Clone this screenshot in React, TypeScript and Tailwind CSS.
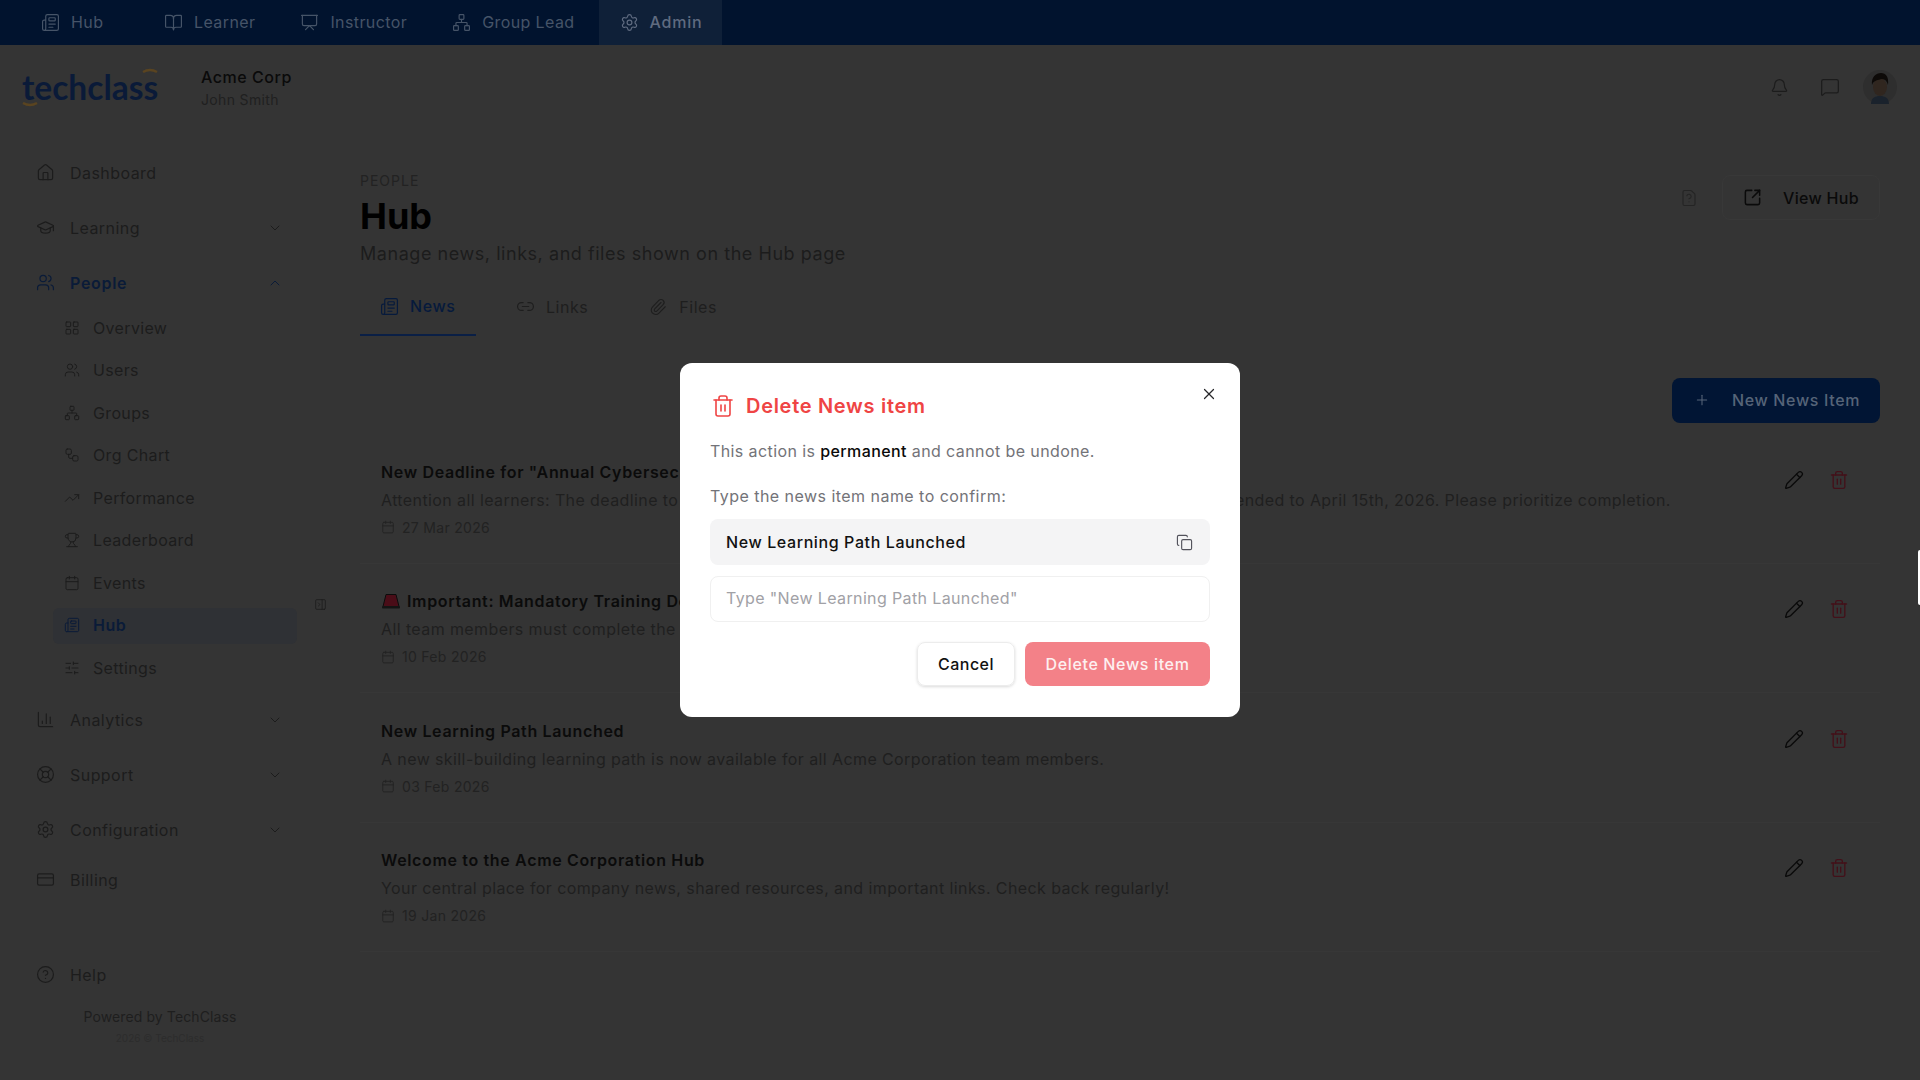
import React from "react";
import {
  Newspaper, BookOpen, Presentation, Network, Settings, Home, GraduationCap, Users, LayoutGrid, Workflow,
  TrendingUp, Trophy, Calendar, SlidersHorizontal, ChartColumn, LifeBuoy, CreditCard, CircleHelp, Bell,
  MessageSquare, FileQuestion, SquareArrowOutUpRight, Plus, Link2, Paperclip, Trash2, X, Copy, Pencil,
  ChevronDown, ChevronUp, PanelLeftClose,
} from "lucide-react";

const font = { fontFamily: "Inter, 'Liberation Sans', sans-serif" };

function TopTab({ icon: Icon, label, active, extra }: { icon: any; label: string; active?: boolean; extra?: string }) {
  return (
    <div className={`flex h-[45px] items-center gap-[11px] pl-[21px] text-[16px] ${active ? "bg-[#0f2038] pr-[19px] text-[#5f6b80] font-medium tracking-[0.8px]" : "pr-[21px] tracking-[0.4px] text-[#465468]"} ${extra ?? ""}`}>
      <Icon size={19} strokeWidth={1.5} />
      <span>{label}</span>
    </div>
  );
}

function NavItem({ icon: Icon, label, chevron, active, h = "h-[55px]" }: { icon: any; label: string; chevron?: "up" | "down"; active?: boolean; h?: string }) {
  return (
    <div className={`flex ${h} items-center pl-[36px] pr-[37px] text-[16px] ${active ? "text-[#0a1b38] font-semibold tracking-[0.7px]" : "text-[#1c1c1c] tracking-[0.45px]"}`}>
      <Icon size={19} strokeWidth={1.5} />
      <span className="ml-[15px] flex-1">{label}</span>
      {chevron === "down" && <ChevronDown size={16} strokeWidth={1.5} />}
      {chevron === "up" && <ChevronUp size={16} strokeWidth={1.5} />}
    </div>
  );
}

function SubItem({ icon: Icon, label, active }: { icon: any; label: string; active?: boolean }) {
  return (
    <div className={`ml-[53px] flex h-[36px] w-[244px] items-center gap-[13px] rounded-md pb-[1px] pl-[11px] text-[16px] ${active ? "bg-[#2f3135] font-semibold tracking-[0.5px] text-[#0a1b38]" : "text-[#1c1c1c] tracking-[0.35px]"}`}>
      <Icon size={16} strokeWidth={1.5} />
      <span>{label}</span>
    </div>
  );
}

function Siren() {
  return (
    <svg width="20" height="16" viewBox="0 0 20 16" className="shrink-0">
      <path d="M5 1.5h10l3 12H2z" fill="#4a0d18" stroke="#0c0c0c" strokeWidth="1" strokeLinejoin="round" />
      <rect x="1" y="13" width="18" height="2.5" rx="1" fill="#141414" />
    </svg>
  );
}

function Row({ title, desc, date, emoji }: { title: string; desc: string; date: string; emoji?: boolean }) {
  return (
    <div className="flex h-[129.5px] items-start border-b border-[#373737] pl-[21px] pr-[31px] pt-[25.5px]">
      <div className="flex-1">
        <div className="flex h-[24px] items-center gap-[6px] text-[16px] font-semibold tracking-[0.65px] text-[#0b0b0b]">
          {emoji && <Siren />}
          <span>{title}</span>
        </div>
        <div className="mt-[4px] h-[24px] text-[16px] leading-[24px] tracking-[0.4px] text-[#1f1f1f]">{desc}</div>
        <div className="mt-[5.5px] flex h-[20px] items-center gap-[7px] text-[14px] tracking-[0.3px] text-[#222]">
          <Calendar size={14} strokeWidth={1.5} />
          <span>{date}</span>
        </div>
      </div>
      <div className="mt-[10px] flex items-center gap-[25px]">
        <Pencil size={20} strokeWidth={1.6} className="text-[#0a0a0a]" />
        <Trash2 size={20} strokeWidth={1.6} className="text-[#431019]" />
      </div>
    </div>
  );
}

function Avatar() {
  return (
    <svg width="34" height="34" viewBox="0 0 34 34">
      <circle cx="17" cy="17" r="17" fill="#2e2e2e" />
      <path d="M8 34c0-6 4-8 9-8s9 2 9 8z" fill="#1a222c" />
      <ellipse cx="17" cy="17" rx="7" ry="9" fill="#30261f" />
      <path d="M9 15c-1-8 4-12 9-12s8 4 7 12c-1-4-3-6-6-6-4 1-8 1-10 6z" fill="#0d0a08" />
    </svg>
  );
}

export default function App() {
  return (
    <div style={font} className="relative flex h-[1080px] w-[1920px] flex-col overflow-hidden bg-[#343434]">
      {/* top bar */}
      <div className="flex h-[45px] shrink-0 items-center gap-[3px] bg-[#01132e] pl-[20px] pb-[1px]">
        <TopTab icon={Newspaper} label="Hub" extra="w-[120px]" />
        <TopTab icon={BookOpen} label="Learner" />
        <TopTab icon={Presentation} label="Instructor" />
        <TopTab icon={Network} label="Group Lead" />
        <TopTab icon={Settings} label="Admin" active />
      </div>

      {/* header */}
      <div className="flex h-[100px] shrink-0 items-center justify-between pb-[16px] pl-[22px] pr-[23px]">
        <div className="flex items-center">
          <div className="relative w-[179px]">
            <span style={{ fontFamily: "Lato, sans-serif" }} className="text-[33.5px] font-bold leading-[40px] text-[#0a1a38]">techclass</span>
            <svg width="16" height="6" viewBox="0 0 16 6" className="absolute left-[120px] top-[1px]"><path d="M1 4q7-4 14 0" stroke="#5a4420" strokeWidth="2.5" fill="none" /></svg>
            <svg width="16" height="6" viewBox="0 0 16 6" className="absolute left-[0px] top-[34px]"><path d="M1 2q7 4 14 0" stroke="#5a4420" strokeWidth="2.5" fill="none" /></svg>
          </div>
          <div>
            <div className="text-[16px] font-medium leading-[24px] tracking-[0.55px] text-[#0a0a0a]">Acme Corp</div>
            <div className="mt-[1px] text-[14px] leading-[20px] tracking-[0.35px] text-[#202020]">John Smith</div>
          </div>
        </div>
        <div className="flex items-center">
          <Bell size={19} strokeWidth={1.5} className="text-[#1c1c1c]" />
          <MessageSquare size={20} strokeWidth={1.5} className="ml-[31px] text-[#1c1c1c]" />
          <div className="ml-[23px]"><Avatar /></div>
        </div>
      </div>

      <div className="relative flex min-h-0 flex-1">
        {/* sidebar */}
        <aside className="flex w-[320px] shrink-0 flex-col">
          <NavItem icon={Home} label="Dashboard" />
          <NavItem icon={GraduationCap} label="Learning" chevron="down" />
          <NavItem icon={Users} label="People" chevron="up" active />
          <div className="flex flex-col gap-[6.5px]">
            <SubItem icon={LayoutGrid} label="Overview" />
            <SubItem icon={Users} label="Users" />
            <SubItem icon={Network} label="Groups" />
            <SubItem icon={Workflow} label="Org Chart" />
            <SubItem icon={TrendingUp} label="Performance" />
            <SubItem icon={Trophy} label="Leaderboard" />
            <SubItem icon={Calendar} label="Events" />
            <SubItem icon={Newspaper} label="Hub" active />
            <SubItem icon={SlidersHorizontal} label="Settings" />
          </div>
          <div className="mt-[6px]">
            <NavItem icon={ChartColumn} label="Analytics" chevron="down" />
            <NavItem icon={LifeBuoy} label="Support" chevron="down" />
            <NavItem icon={Settings} label="Configuration" chevron="down" />
            <NavItem icon={CreditCard} label="Billing" h="h-[45px]" />
          </div>
          <div className="mt-auto">
            <NavItem icon={CircleHelp} label="Help" h="h-[45px]" />
            <div className="mt-[10px] text-center text-[14px] leading-[20px] tracking-[0.1px] text-[#1e1e1e]">Powered by TechClass</div>
            <div className="mb-[35px] mt-[4px] text-center text-[10px] leading-[14px] text-[#2c2c2c]">2026 © TechClass</div>
          </div>
        </aside>
        <PanelLeftClose size={13} strokeWidth={1.5} className="absolute left-[314px] top-[453px] rotate-180 text-[#1c1c1c]" />

        {/* main */}
        <main className="flex-1 pl-[40px] pr-[40px] pt-[26px]">
          <div className="flex items-start justify-between">
            <div>
              <div className="text-[14px] leading-[20px] tracking-[1px] text-[#222]">PEOPLE</div>
              <h1 className="mt-[5px] text-[36px] font-bold leading-[40px] text-black">Hub</h1>
              <p className="mt-[4px] text-[18px] leading-[28px] tracking-[0.55px] text-[#1c1c1c]">Manage news, links, and files shown on the Hub page</p>
            </div>
            <div className="mt-[4px] flex items-center">
              <FileQuestion size={18} strokeWidth={1.5} className="mr-[24px] text-[#242424]" />
              <div className="flex h-[45px] w-[158px] items-center gap-[21px] rounded-lg border border-[#383838] pl-[20px] text-[16px] font-medium tracking-[0.3px] text-[#0a0a0a]">
                <SquareArrowOutUpRight size={19} strokeWidth={1.9} />
                <span>View Hub</span>
              </div>
            </div>
          </div>

          {/* tabs */}
          <div className="mt-[11px] flex h-[57px] items-stretch text-[16px]">
            <div className="flex w-[116px] items-center gap-[11px] border-b-2 border-[#0a1f45] pb-[1px] pl-[20px] font-medium tracking-[0.6px] text-[#061a3c]">
              <Newspaper size={19} strokeWidth={1.5} />
              <span>News</span>
            </div>
            <div className="ml-[20px] flex items-center gap-[11px] pb-[2px] pl-[20px] tracking-[0.55px] text-[#1e1e1e]">
              <Link2 size={19} strokeWidth={1.5} />
              <span>Links</span>
            </div>
            <div className="ml-[41px] flex items-center gap-[12px] pb-[2px] pl-[20px] tracking-[0.5px] text-[#1e1e1e]">
              <Paperclip size={18} strokeWidth={1.5} />
              <span>Files</span>
            </div>
          </div>

          <div className="mt-[42px] flex justify-end">
            <div className="flex h-[45px] w-[208px] items-center gap-[22px] rounded-lg bg-[#011534] pb-[1px] pl-[22px] text-[16px] font-medium tracking-[0.65px] text-[#566478]">
              <Plus size={16} strokeWidth={1.6} />
              <span>New News Item</span>
            </div>
          </div>

          <div className="mt-[11px]">
            <Row title={'New Deadline for "Annual Cybersecurity Awareness" Course Extended'} desc={'Attention all learners: The deadline to complete the "Annual Cybersecurity Awareness" course has been extended to April 15th, 2026. Please prioritize completion.'} date="27 Mar 2026" />
            <Row emoji title="Important: Mandatory Training Deadline" desc="All team members must complete the mandatory compliance training before the end of the month." date="10 Feb 2026" />
            <Row title="New Learning Path Launched" desc="A new skill-building learning path is now available for all Acme Corporation team members." date="03 Feb 2026" />
            <Row title="Welcome to the Acme Corporation Hub" desc="Your central place for company news, shared resources, and important links. Check back regularly!" date="19 Jan 2026" />
          </div>
        </main>
      </div>

      {/* modal layer */}
      <div className="absolute inset-0 flex items-center justify-center">
        <div className="relative h-[354px] w-[560px] rounded-xl bg-white px-[30px] pt-[30px]">
          <X size={18} strokeWidth={1.6} className="absolute right-[22px] top-[22px] text-[#27272a]" />
          <div className="flex h-[26px] items-center gap-[11px] pl-[1px] text-[20px] font-semibold tracking-[0.7px] text-[#ef4444]">
            <Trash2 size={24} strokeWidth={1.6} />
            <span>Delete News item</span>
          </div>
          <p className="mt-[20px] text-[16px] leading-[24px] tracking-[0.4px] text-[#737378]">
            This action is <span className="font-medium text-[#0a0a0a]">permanent</span> and cannot be undone.
          </p>
          <p className="mt-[21px] text-[16px] leading-[24px] tracking-[0.46px] text-[#737378]">Type the news item name to confirm:</p>
          <div className="mt-[11px] flex h-[46px] items-center justify-between rounded-lg bg-[#f4f4f5] pl-[16px] pr-[17px] text-[16px] font-medium tracking-[0.6px] text-[#111]">
            <span>New Learning Path Launched</span>
            <Copy size={17} strokeWidth={1.6} className="text-[#52525b]" />
          </div>
          <div className="mt-[11px] flex h-[46px] items-center rounded-lg border border-[#f0f0f0] pb-[3px] pl-[15px] text-[16px] tracking-[0.37px] text-[#a1a1a6]">
            Type "New Learning Path Launched"
          </div>
          <div className="mt-[20px] flex justify-end gap-[10px]">
            <div className="flex h-[44px] w-[98px] items-center justify-center rounded-lg border border-[#ececec] text-[16px] font-medium tracking-[0.45px] text-[#111] shadow-[0_1px_3px_rgba(0,0,0,0.15)]">Cancel</div>
            <div className="flex h-[44px] w-[185px] items-center justify-center rounded-lg bg-[#f38188] text-[16px] font-medium tracking-[0.65px] text-[#fdf0f0]">Delete News item</div>
          </div>
        </div>
      </div>

      {/* right edge tab */}
      <div className="absolute right-0 top-[550px] h-[55px] w-[2px] rounded-l bg-white" />
    </div>
  );
}
